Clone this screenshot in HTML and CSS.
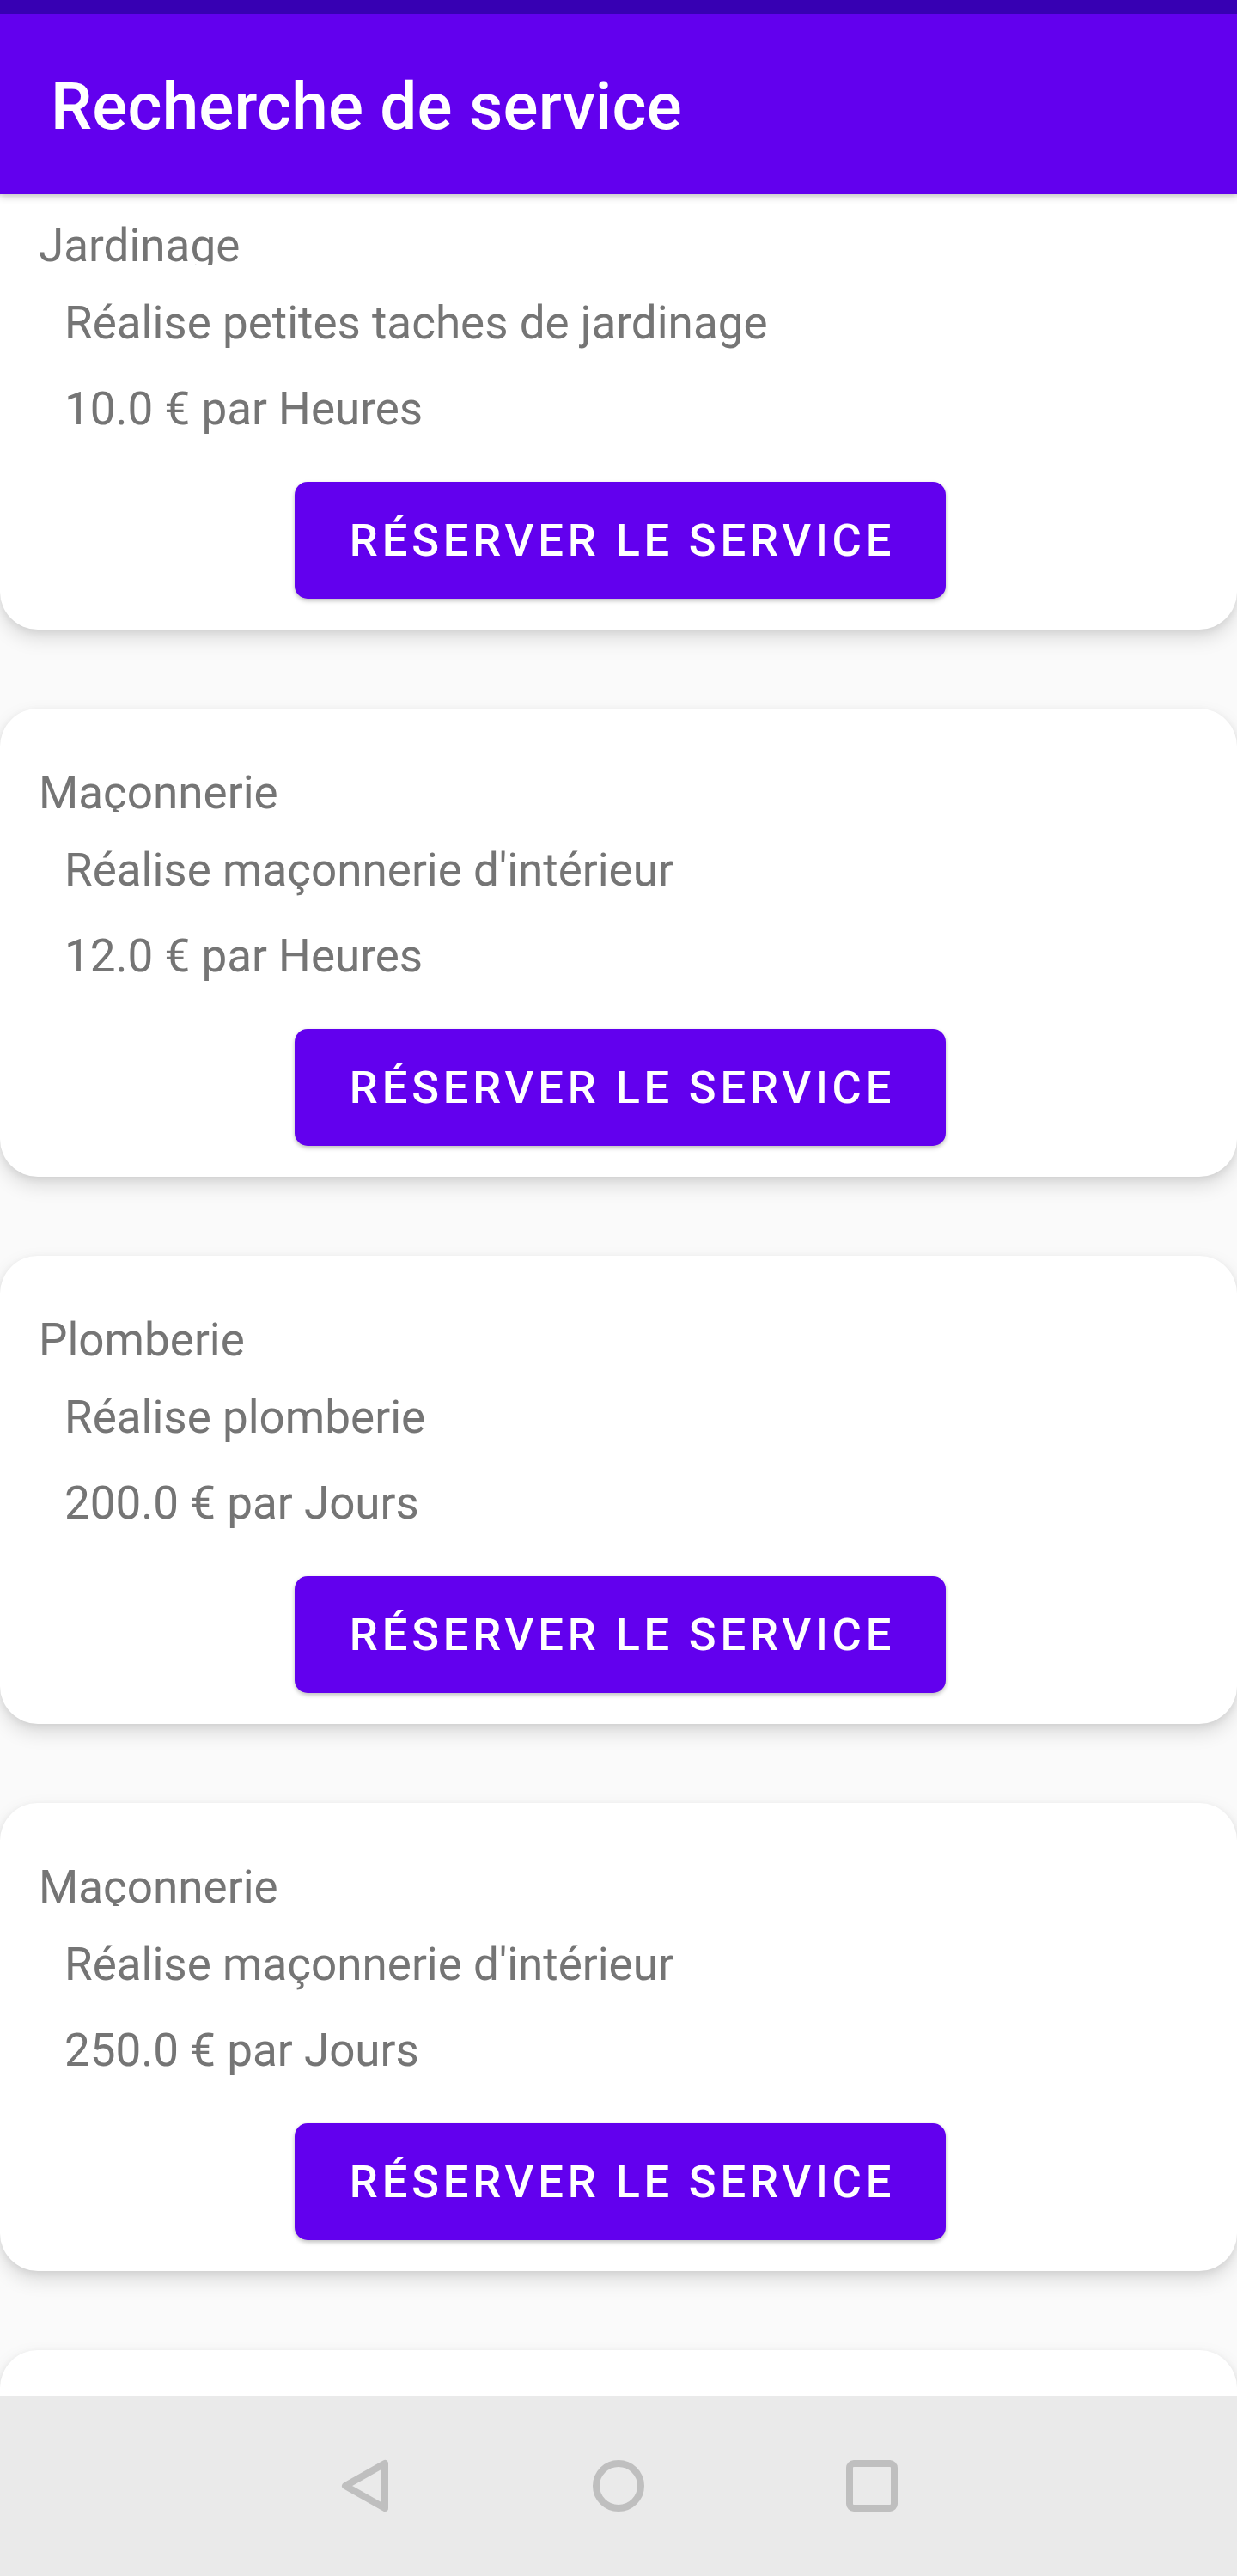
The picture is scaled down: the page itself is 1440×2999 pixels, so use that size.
FILE: index.html
```html
<!DOCTYPE html>
<html lang="fr">
<head>
<meta charset="utf-8">
<title>Recherche de service</title>
<link rel="stylesheet" href="styles.css">
</head>
<body>
<div class="screen">
  <header class="appbar">
    <div class="statusbar"></div>
    <div class="toolbar"><h1 class="title">Recherche de service</h1></div>
  </header>
  <main class="list">
    <div class="list-inner">
      <section class="card">
        <div class="name">Jardinage</div>
        <div class="desc">Réalise petites taches de jardinage</div>
        <div class="price">10.0 € par Heures</div>
        <button class="btn">RÉSERVER LE SERVICE</button>
      </section>
      <section class="card">
        <div class="name">Maçonnerie</div>
        <div class="desc">Réalise maçonnerie d'intérieur</div>
        <div class="price">12.0 € par Heures</div>
        <button class="btn">RÉSERVER LE SERVICE</button>
      </section>
      <section class="card">
        <div class="name">Plomberie</div>
        <div class="desc">Réalise plomberie</div>
        <div class="price">200.0 € par Jours</div>
        <button class="btn">RÉSERVER LE SERVICE</button>
      </section>
      <section class="card">
        <div class="name">Maçonnerie</div>
        <div class="desc">Réalise maçonnerie d'intérieur</div>
        <div class="price">250.0 € par Jours</div>
        <button class="btn">RÉSERVER LE SERVICE</button>
      </section>
      <section class="card card-partial"></section>
    </div>
  </main>
  <nav class="navbar">
    <svg class="nav-icon" width="64" height="64" viewBox="0 0 64 64" aria-hidden="true">
      <path d="M55 6 L55 58 L9 32 Z" fill="none" stroke="#bfbfbf" stroke-width="8" stroke-linejoin="round"/>
    </svg>
    <svg class="nav-icon" width="64" height="64" viewBox="0 0 64 64" aria-hidden="true">
      <circle cx="32" cy="32" r="26" fill="none" stroke="#bfbfbf" stroke-width="8"/>
    </svg>
    <svg class="nav-icon" width="64" height="64" viewBox="0 0 64 64" aria-hidden="true">
      <rect x="6" y="6" width="52" height="52" rx="5" fill="none" stroke="#bfbfbf" stroke-width="8"/>
    </svg>
  </nav>
</div>
</body>
</html>
```

FILE: styles.css
```css
* { box-sizing: border-box; }
html, body { margin: 0; padding: 0; }
body {
  background: #fafafa;
  font-family: Roboto, "Noto Sans", "Liberation Sans", sans-serif;
}
.screen {
  width: 1440px;
  height: 2999px;
  display: flex;
  flex-direction: column;
  overflow: hidden;
}
.appbar {
  position: relative;
  z-index: 2;
  flex: 0 0 auto;
  box-shadow: 0 4px 8px rgba(0,0,0,0.16), 0 2px 4px rgba(0,0,0,0.08);
}
.statusbar {
  height: 16px;
  background: #3700b3;
}
.toolbar {
  height: 210px;
  background: #6200ee;
  display: flex;
  align-items: flex-start;
  padding: 63px 0 0 59px;
}
.title {
  margin: 0;
  color: #ffffff;
  font-family: Roboto, sans-serif;
  font-weight: 500;
  font-size: 76.5px;
  line-height: 90px;
  letter-spacing: 0.2px;
}
.list {
  flex: 1 1 auto;
  overflow: hidden;
  position: relative;
  z-index: 1;
}
.list-inner {
  display: flex;
  flex-direction: column;
  gap: 92px;
  margin-top: -38px;
}
.card {
  height: 545px;
  background: #ffffff;
  border-radius: 44px;
  padding: 67px 0 0 0;
  display: flex;
  flex-direction: column;
  align-items: flex-start;
  box-shadow: 0 10px 22px rgba(0,0,0,0.13), 0 3px 8px rgba(0,0,0,0.07);
  flex: 0 0 auto;
}
.name, .desc, .price {
  font-size: 53px;
  line-height: 62px;
  color: #757575;
  white-space: nowrap;
}
.name {
  height: 53px;
  overflow: hidden;
  margin-left: 45px;
}
.desc {
  margin-left: 75px;
  margin-top: 36.5px;
}
.price {
  margin-left: 75px;
  margin-top: 38px;
}
.btn {
  align-self: center;
  margin-top: 54px;
  height: 136px;
  width: 758px;
  border: none;
  border-radius: 15px;
  background: #6200ee;
  color: #ffffff;
  font-family: Roboto, sans-serif;
  font-weight: 500;
  font-size: 52.5px;
  letter-spacing: 4.8px;
  padding: 0 0 0 5px;
  box-shadow: 0 3px 5px rgba(0,0,0,0.18), 0 1px 4px rgba(0,0,0,0.10);
  cursor: pointer;
  transform: translateX(2px);
}
.navbar {
  position: relative;
  z-index: 3;
  flex: 0 0 210px;
  background: #eaeaea;
  display: flex;
  align-items: center;
  justify-content: center;
  gap: 231px;
}
.nav-icon {
  display: block;
}
```
